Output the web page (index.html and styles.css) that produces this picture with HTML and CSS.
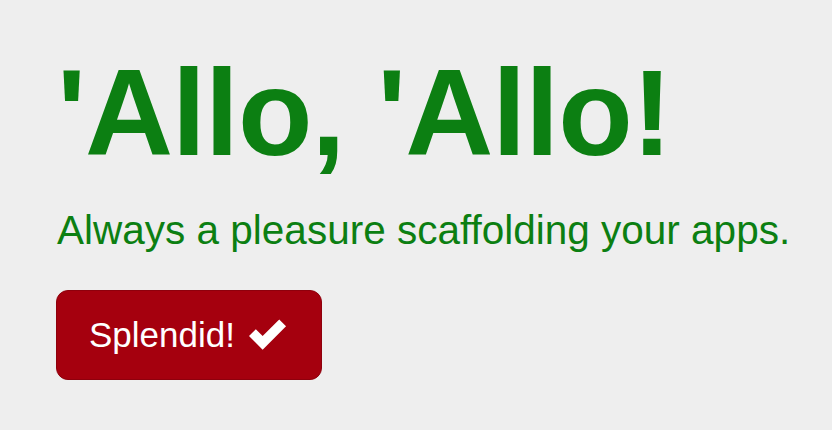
FILE: index.html
```html
<!DOCTYPE html>
<html>
<head>
<meta charset="utf-8">
<link rel="stylesheet" href="styles.css">
</head>
<body>
<div class="jumbotron">
  <h1 class="title">'Allo, 'Allo!</h1>
  <p class="lead">Always a pleasure scaffolding your apps.</p>
  <a class="btn" href="#">Splendid! <svg class="check" viewBox="0 0 40 32" width="39" height="32"><path d="M0 17 L7 10 L14 17 L31 0 L38 7 L14 31 Z" fill="#fff"/></svg></a>
</div>
</body>
</html>
```
FILE: styles.css
```css
html, body {
  margin: 0;
  padding: 0;
  background: #eeeeee;
}
body {
  font-family: "Liberation Sans", Arial, sans-serif;
}
.jumbotron {
  padding: 45px 0 0 57px;
}
.title {
  margin: 0;
  font-size: 122px;
  line-height: 136px;
  font-weight: bold;
  color: #0c7f12;
  letter-spacing: -1px;
}
.lead {
  margin: 24px 0 0 0;
  font-size: 40.5px;
  line-height: 50px;
  color: #0c7f12;
}
.btn {
  display: inline-flex;
  align-items: center;
  gap: 14px;
  box-sizing: border-box;
  margin-top: 35px;
  width: 266px;
  height: 90px;
  padding: 0 32px;
  margin-left: -1px;
  background: #a5000e;
  border: 1px solid #8e000c;
  border-radius: 12px;
  color: #fff;
  font-size: 35px;
  text-decoration: none;
}
.check {
  display: block;
}
```
